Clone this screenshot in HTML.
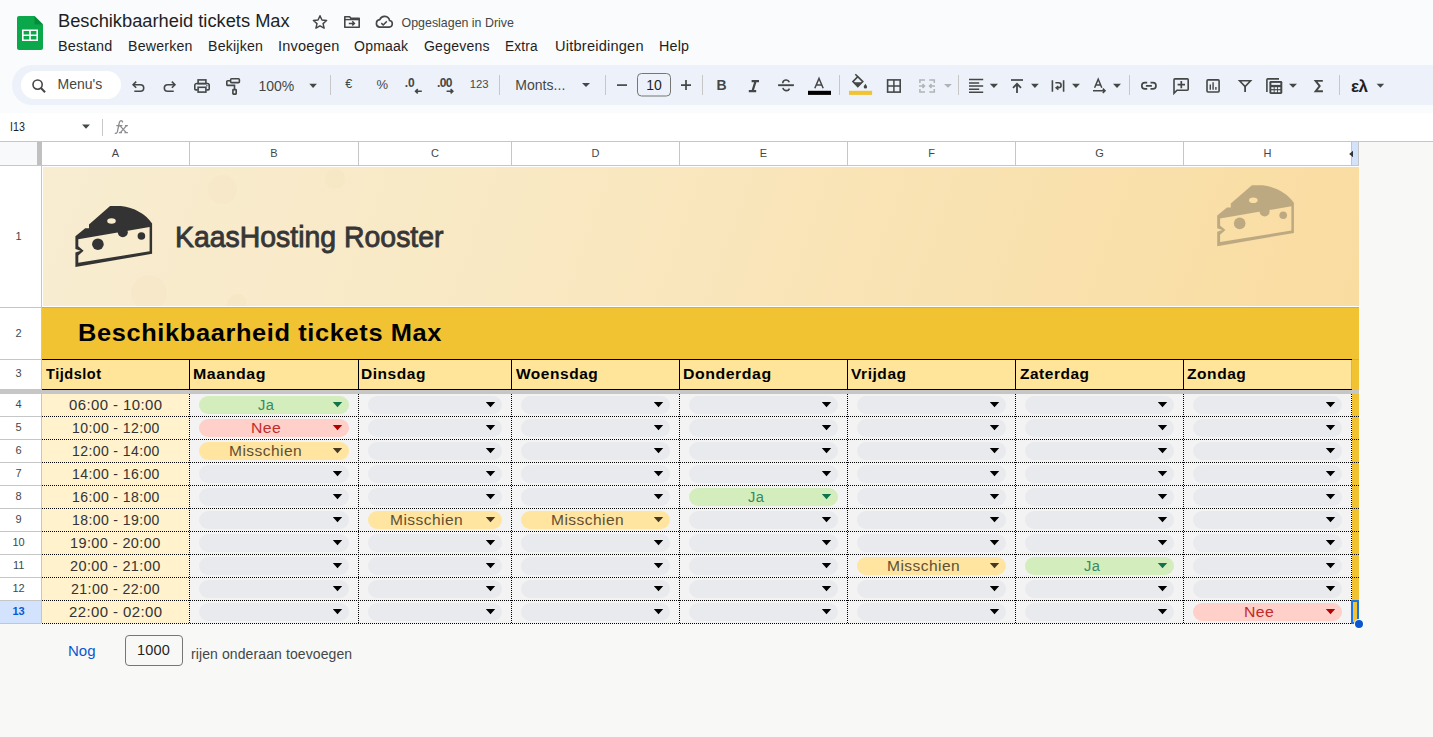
<!DOCTYPE html><html><head><meta charset="utf-8"><style>body{margin:0;width:1433px;height:737px;overflow:hidden;position:relative;background:#f9fbfd;font-family:'Liberation Sans',sans-serif;}div{box-sizing:border-box}</style></head><body>
<svg style="position:absolute;left:17px;top:16px;" width="26" height="34" viewBox="0 0 26 34"><path d="M2 0H17.5L26 8.5V32a2 2 0 0 1-2 2H2a2 2 0 0 1-2-2V2a2 2 0 0 1 2-2z" fill="#0aa84a"/><path d="M17.5 0L26 8.5H17.5z" fill="#058c3a"/><path d="M5 13.5h16v11.5H5z M6.6 15v3.5h5.6V15z M13.8 15v3.5h5.6V15z M6.6 20v3.5h5.6V20z M13.8 20v3.5h5.6V20z" fill="#fff" fill-rule="evenodd"/></svg>
<div style="position:absolute;left:58px;top:11.51px;font-size:18.3px;line-height:18.3px;color:#1f1f1f;font-weight:400;letter-spacing:0px;white-space:nowrap;">Beschikbaarheid tickets Max</div>
<svg style="position:absolute;left:311px;top:14px;" width="18" height="16" viewBox="0 0 24 24"><path d="M12 2.6l2.9 6.4 7 .7-5.3 4.7 1.6 6.9L12 17.7l-6.1 3.6 1.6-6.9L2.1 9.7l7-.7z" fill="none" stroke="#444746" stroke-width="2.2" stroke-linejoin="round"/></svg>
<svg style="position:absolute;left:343px;top:15px;" width="18" height="14" viewBox="0 0 18 14"><path d="M1.8 1.8h4.8l1.4 1.6H16.2V12.2H1.8z" fill="none" stroke="#444746" stroke-width="1.6" stroke-linejoin="round"/><path d="M1.8 4.6H16.2" stroke="#444746" stroke-width="1.4"/><path d="M5.8 8.4h5.6M9.3 6.3l2.1 2.1-2.1 2.1" fill="none" stroke="#444746" stroke-width="1.5"/></svg>
<svg style="position:absolute;left:374px;top:15px;" width="20" height="14" viewBox="0 0 20 14"><path d="M5.4 12.1H15.2a3.3 3.3 0 0 0 .35-6.55A5.1 5.1 0 0 0 5.8 4.6 3.8 3.8 0 0 0 5.4 12.1z" fill="none" stroke="#444746" stroke-width="1.6"/><path d="M7.3 8.1l1.9 1.9 3.6-3.6" fill="none" stroke="#444746" stroke-width="1.5"/></svg>
<div style="position:absolute;left:401.6px;top:16.80px;font-size:12.4px;line-height:12.4px;color:#444746;font-weight:400;letter-spacing:0px;white-space:nowrap;">Opgeslagen in Drive</div>
<div style="position:absolute;left:57.57px;top:39.15px;font-size:14px;line-height:14px;color:#1f1f1f;font-weight:400;letter-spacing:0.2px;white-space:nowrap;transform:scaleX(1.0314);transform-origin:0 0;">Bestand</div>
<div style="position:absolute;left:127.69px;top:39.15px;font-size:14px;line-height:14px;color:#1f1f1f;font-weight:400;letter-spacing:0.2px;white-space:nowrap;transform:scaleX(1.0129);transform-origin:0 0;">Bewerken</div>
<div style="position:absolute;left:207.79px;top:39.15px;font-size:14px;line-height:14px;color:#1f1f1f;font-weight:400;letter-spacing:0.2px;white-space:nowrap;transform:scaleX(1.0113);transform-origin:0 0;">Bekijken</div>
<div style="position:absolute;left:277.56px;top:39.15px;font-size:14px;line-height:14px;color:#1f1f1f;font-weight:400;letter-spacing:0.2px;white-space:nowrap;transform:scaleX(1.0386);transform-origin:0 0;">Invoegen</div>
<div style="position:absolute;left:353.80px;top:39.15px;font-size:14px;line-height:14px;color:#1f1f1f;font-weight:400;letter-spacing:0.2px;white-space:nowrap;transform:scaleX(1.0038);transform-origin:0 0;">Opmaak</div>
<div style="position:absolute;left:423.80px;top:39.15px;font-size:14px;line-height:14px;color:#1f1f1f;font-weight:400;letter-spacing:0.2px;white-space:nowrap;transform:scaleX(1.0031);transform-origin:0 0;">Gegevens</div>
<div style="position:absolute;left:505.42px;top:39.15px;font-size:14px;line-height:14px;color:#1f1f1f;font-weight:400;letter-spacing:0.2px;white-space:nowrap;transform:scaleX(0.9758);transform-origin:0 0;">Extra</div>
<div style="position:absolute;left:554.76px;top:39.15px;font-size:14px;line-height:14px;color:#1f1f1f;font-weight:400;letter-spacing:0.2px;white-space:nowrap;transform:scaleX(1.0434);transform-origin:0 0;">Uitbreidingen</div>
<div style="position:absolute;left:659.18px;top:39.15px;font-size:14px;line-height:14px;color:#1f1f1f;font-weight:400;letter-spacing:0.2px;white-space:nowrap;transform:scaleX(1.0214);transform-origin:0 0;">Help</div>
<div style="position:absolute;left:12px;top:65px;width:1430px;height:40px;background:#edf2fa;border-radius:20px 0 0 20px"></div>
<div style="position:absolute;left:21px;top:71px;width:100px;height:28px;background:#fff;border-radius:14px"></div>
<svg style="position:absolute;left:0;top:65px" width="1433" height="40" viewBox="0 65 1433 40"><circle cx="37.6" cy="84.6" r="4.6" fill="none" stroke="#444746" stroke-width="1.6" stroke-width="1.8"/><path d="M40.9 88l4.2 4.2" stroke="#444746" stroke-width="2"/><path d="M136.2 81.6l-3.1 3.1 3.1 3.1" fill="none" stroke="#444746" stroke-width="1.6" stroke-width="1.7"/><path d="M133.4 84.7H140.4A3.3 3.3 0 0 1 140.4 91.3H134.3" fill="none" stroke="#444746" stroke-width="1.6" stroke-width="1.7"/><g transform="matrix(-1 0 0 1 308.05 0)"><path d="M136.2 81.6l-3.1 3.1 3.1 3.1" fill="none" stroke="#444746" stroke-width="1.6" stroke-width="1.7"/><path d="M133.4 84.7H140.4A3.3 3.3 0 0 1 140.4 91.3H134.3" fill="none" stroke="#444746" stroke-width="1.6" stroke-width="1.7"/></g><rect x="198.1" y="79.9" width="7.8" height="3.8" fill="none" stroke="#444746" stroke-width="1.6"/><path d="M197.6 89.9H195.8A1 1 0 0 1 194.8 88.9V85.4A1.9 1.9 0 0 1 196.7 83.5H207.3A1.9 1.9 0 0 1 209.2 85.4V88.9A1 1 0 0 1 208.2 89.9H206.4" fill="none" stroke="#444746" stroke-width="1.6"/><rect x="198.1" y="87.3" width="7.8" height="4.8" fill="none" stroke="#444746" stroke-width="1.6"/><circle cx="206.9" cy="85.8" r="0.75" fill="#444746"/><rect x="230.6" y="78.8" width="8.8" height="3.8" rx="0.9" fill="none" stroke="#444746" stroke-width="1.6" stroke-width="1.5"/><path d="M230.6 80.7H227.7A0.9 0.9 0 0 0 226.8 81.6V84.5A0.9 0.9 0 0 0 227.7 85.4H234.5V89.6" fill="none" stroke="#444746" stroke-width="1.6" stroke-width="1.5"/><rect x="232.9" y="89.6" width="3.3" height="4.5" rx="0.5" fill="none" stroke="#444746" stroke-width="1.6" stroke-width="1.5"/><path d="M309.3 83.8h7.6l-3.8 4.1z" fill="#444746"/><path d="M582 83h8l-4.0 4.1z" fill="#444746"/><path d="M330.5 75V95" stroke="#c7c7c7" stroke-width="1"/><path d="M499.5 75V95" stroke="#c7c7c7" stroke-width="1"/><path d="M605.5 75V95" stroke="#c7c7c7" stroke-width="1"/><path d="M702.5 75V95" stroke="#c7c7c7" stroke-width="1"/><path d="M839.5 75V95" stroke="#c7c7c7" stroke-width="1"/><path d="M958.5 75V95" stroke="#c7c7c7" stroke-width="1"/><path d="M1129.5 75V95" stroke="#c7c7c7" stroke-width="1"/><path d="M1339.5 75V95" stroke="#c7c7c7" stroke-width="1"/><path d="M421.8 91.3H415.6M417.8 89.2l-2.2 2.1 2.2 2.1" fill="none" stroke="#444746" stroke-width="1.6"/><path d="M446.6 91.3H452.8M450.6 89.2l2.2 2.1-2.2 2.1" fill="none" stroke="#444746" stroke-width="1.6"/><path d="M617 85.1H627" stroke="#444746" stroke-width="1.7"/><path d="M681 85.1H691M686 80.1V90.1" stroke="#444746" stroke-width="1.7"/><rect x="637.5" y="73.5" width="33" height="22.5" rx="4" fill="none" stroke="#747775" stroke-width="1"/><path d="M751.6 81.1H759M748.8 91.1H756.2M755.6 81.1L752.5 91.1" fill="none" stroke="#444746" stroke-width="2.2"/><path d="M778.1 85.2H793.9" stroke="#444746" stroke-width="1.9"/><path d="M782.7 83.3A3.4 3.4 0 0 1 789.3 82.3M782.9 87.9A3.5 3.5 0 0 0 789.5 88.6" fill="none" stroke="#444746" stroke-width="1.6" stroke-width="1.8"/><path d="M814.8 88.3L819 78.4L823.2 88.3M816.3 85H821.7" fill="none" stroke="#444746" stroke-width="1.5"/><rect x="808" y="90.8" width="23" height="4.1" fill="#000"/><path d="M855.3 74.2L857.8 76.7" stroke="#444746" stroke-width="1.6"/><path d="M852.9 81.6L857.8 76.7L862.8 81.6L857.8 86.5z" fill="none" stroke="#444746" stroke-width="1.6" stroke-width="1.6"/><path d="M853.6 82.3H862.1L857.8 86.5z" fill="#444746"/><path d="M865.4 83.8C864.6 85.2 863.7 86.1 863.7 86.9A1.7 1.7 0 0 0 867.1 86.9C867.1 86.1 866.2 85.2 865.4 83.8z" fill="#444746"/><rect x="849" y="90.8" width="23.1" height="4.1" fill="#f1c232"/><rect x="887.6" y="79.9" width="12.6" height="12.2" fill="none" stroke="#444746" stroke-width="1.6" stroke-width="1.7"/><path d="M893.9 79.9V92.1M887.6 86H900.2" stroke="#444746" stroke-width="1.5"/><path d="M925 79.9H919.9V83M919.9 89V92H925M929.3 79.9H934.3V83M934.3 89V92H929.3" fill="none" stroke="#b0b3b5" stroke-width="1.5"/><path d="M919 86H924.5M922.5 84l2 2-2 2M935 86H929.5M931.5 84l-2 2 2 2" fill="none" stroke="#b0b3b5" stroke-width="1.5"/><path d="M944 84h7.9l-3.95 3.8z" fill="#b0b3b5"/><path d="M969 79.6H983.2M969 82.9H979.2M969 86H983.2M969 89.2H979.2M969 92.3H983.2" stroke="#444746" stroke-width="1.5"/><path d="M989.8 83.8h8.2l-4.1 4.1z" fill="#444746"/><path d="M1011 80H1023" stroke="#444746" stroke-width="1.7"/><path d="M1017 92.9V84.3M1013 87.8L1017 83.8L1021 87.8" fill="none" stroke="#444746" stroke-width="1.8"/><path d="M1031 83.8h7.8l-3.9 4.1z" fill="#444746"/><path d="M1052.4 80.2V91.8M1063.6 80.2V91.8" stroke="#444746" stroke-width="1.6"/><path d="M1055.4 82.8H1058.6A2.5 2.5 0 0 1 1058.6 87.8H1056.3" fill="none" stroke="#444746" stroke-width="1.6" stroke-width="1.5"/><path d="M1058.4 86L1056.2 87.8L1058.4 89.6" fill="none" stroke="#444746" stroke-width="1.6" stroke-width="1.5"/><path d="M1072 83.8h7.9l-3.95 4.1z" fill="#444746"/><path d="M1094.6 87.8L1098.2 79.2L1101.8 87.8M1095.9 85H1100.5" fill="none" stroke="#444746" stroke-width="1.5"/><path d="M1093 90.8H1104.8M1102.8 88.6L1105 90.8L1102.8 93" fill="none" stroke="#444746" stroke-width="1.6"/><path d="M1113 83.8h8l-4.0 4.1z" fill="#444746"/><path d="M1147.2 82.7H1144.9A3.1 3.1 0 0 0 1144.9 88.9H1147.2M1150.5 82.7H1152.9A3.1 3.1 0 0 1 1152.9 88.9H1150.5M1145.9 85.8H1151.9" fill="none" stroke="#444746" stroke-width="1.7"/><path d="M1174 93.3V79.8A0.9 0.9 0 0 1 1174.9 78.9H1187.3A0.9 0.9 0 0 1 1188.2 79.8V89.3A0.9 0.9 0 0 1 1187.3 90.2H1177z" fill="none" stroke="#444746" stroke-width="1.6" stroke-width="1.7"/><path d="M1177.6 84.6H1185M1181.3 80.9V88.3" stroke="#444746" stroke-width="1.7"/><rect x="1207" y="79.9" width="12.1" height="12.1" rx="1" fill="none" stroke="#444746" stroke-width="1.6" stroke-width="1.7"/><path d="M1210.3 89.8V84.4M1213.1 89.8V82.3M1215.9 89.8V87" stroke="#444746" stroke-width="1.4"/><path d="M1239.6 80.8H1250.6L1245.1 86.6z" fill="none" stroke="#444746" stroke-width="1.6" stroke-width="1.6"/><path d="M1245.1 86V92" stroke="#444746" stroke-width="1.8"/><path d="M1266.9 92V79.8A0.9 0.9 0 0 1 1267.8 78.9H1279" fill="none" stroke="#444746" stroke-width="1.6" stroke-width="1.4"/><rect x="1269.4" y="80.9" width="12.9" height="13.1" rx="1.4" fill="#444746"/><rect x="1271.4" y="82.9" width="8.9" height="2" fill="#edf2fa"/><rect x="1271.3" y="87.2" width="2.4" height="1.9" fill="#edf2fa"/><rect x="1271.3" y="90.3" width="2.4" height="1.9" fill="#edf2fa"/><rect x="1274.6" y="87.2" width="2.4" height="1.9" fill="#edf2fa"/><rect x="1274.6" y="90.3" width="2.4" height="1.9" fill="#edf2fa"/><rect x="1277.9" y="87.2" width="2.4" height="1.9" fill="#edf2fa"/><rect x="1277.9" y="90.3" width="2.4" height="1.9" fill="#edf2fa"/><path d="M1289 83.8h8l-4.0 4z" fill="#444746"/><path d="M1322.8 80.9H1315.6L1319.7 86.1L1315.6 91.3H1322.9" fill="none" stroke="#444746" stroke-width="1.9"/><path d="M1376.6 83.8h7.6l-3.8 4z" fill="#444746"/></svg>
<div style="position:absolute;left:57.6px;top:77.35px;font-size:14px;line-height:14px;color:#444746;font-weight:400;letter-spacing:0px;white-space:nowrap;">Menu's</div>
<div style="position:absolute;left:258.5px;top:79.15px;font-size:14px;line-height:14px;color:#444746;font-weight:400;letter-spacing:0px;white-space:nowrap;">100%</div>
<div style="position:absolute;left:345.2px;top:78.22px;font-size:12.5px;line-height:12.5px;color:#444746;font-weight:400;letter-spacing:0px;white-space:nowrap;">€</div>
<div style="position:absolute;left:376.5px;top:77.80px;font-size:13px;line-height:13px;color:#444746;font-weight:400;letter-spacing:0px;white-space:nowrap;">%</div>
<div style="position:absolute;left:404.8px;top:76.84px;font-size:12px;line-height:12px;color:#444746;font-weight:700;letter-spacing:-0.2px;white-space:nowrap;">.0</div>
<div style="position:absolute;left:437px;top:76.84px;font-size:12px;line-height:12px;color:#444746;font-weight:700;letter-spacing:-0.6px;white-space:nowrap;">.00</div>
<div style="position:absolute;left:469.8px;top:79.23px;font-size:11.3px;line-height:11.3px;color:#444746;font-weight:400;letter-spacing:0px;white-space:nowrap;">123</div>
<div style="position:absolute;left:515.2px;top:78.05px;font-size:14px;line-height:14px;color:#444746;font-weight:400;letter-spacing:0.05px;white-space:nowrap;">Monts...</div>
<div style="position:absolute;left:646.3px;top:78.05px;font-size:14px;line-height:14px;color:#1f1f1f;font-weight:400;letter-spacing:0px;white-space:nowrap;">10</div>
<div style="position:absolute;left:716.6px;top:78.45px;font-size:14px;line-height:14px;color:#444746;font-weight:700;letter-spacing:0px;white-space:nowrap;">B</div>
<div style="position:absolute;left:1351px;top:77.91px;font-size:17px;line-height:17px;color:#1f1f1f;font-weight:700;letter-spacing:-0.6px;white-space:nowrap;">ελ</div>
<div style="position:absolute;left:0px;top:113px;width:1433px;height:28px;background:#fff;"></div>
<div style="position:absolute;left:9.68px;top:120.30px;font-size:13px;line-height:13px;color:#1f1f1f;font-weight:400;letter-spacing:0px;white-space:nowrap;transform:scaleX(0.8235);transform-origin:0 0;">I13</div>
<svg style="position:absolute;left:0;top:113px" width="200" height="28" viewBox="0 113 200 28"><path d="M82 124.6h8l-4 4.2z" fill="#444746"/><path d="M102.5 119V136" stroke="#c7c7c7"/></svg>
<svg style="position:absolute;left:100px;top:113px" width="40" height="28" viewBox="100 113 40 28"><g fill="none" stroke="#8b8d90" stroke-width="1.3"><path d="M122.4 122.6A1.3 1.3 0 0 0 121.8 120.9C120.6 120.4 119.7 121.1 119.3 122.6L117.4 131.7C117 133.4 115.8 133.7 114.8 133.2"/><path d="M116.3 125.6H122.4"/><path d="M119.9 125.6L126.2 132.6M126.6 125.6L120.3 132.6"/><path d="M118.8 125.6H121.5M124.9 125.6H127.9M118.9 132.6H122M124.5 132.6H127.9" stroke-width="1.2"/></g></svg>
<div style="position:absolute;left:0px;top:141px;width:1433px;height:596px;background:#f8f9f7;"></div>
<div style="position:absolute;left:0px;top:141px;width:1433px;height:1px;background:#c4c7c5;"></div>
<div style="position:absolute;left:0px;top:142px;width:37px;height:23px;background:#f8f9fa;"></div>
<div style="position:absolute;left:42px;top:142px;width:1310px;height:23px;background:#fff;"></div>
<div style="position:absolute;left:37px;top:142px;width:5px;height:23px;background:#c0c0c0;"></div>
<div style="position:absolute;left:1352px;top:142px;width:6px;height:23px;background:#d3e3fd;"></div>
<div style="position:absolute;left:0px;top:165px;width:1359px;height:1px;background:#c4c7c5;"></div>
<div style="position:absolute;left:189px;top:142px;width:1px;height:23px;background:#c4c7c5;"></div>
<div style="position:absolute;left:358px;top:142px;width:1px;height:23px;background:#c4c7c5;"></div>
<div style="position:absolute;left:511px;top:142px;width:1px;height:23px;background:#c4c7c5;"></div>
<div style="position:absolute;left:679px;top:142px;width:1px;height:23px;background:#c4c7c5;"></div>
<div style="position:absolute;left:847px;top:142px;width:1px;height:23px;background:#c4c7c5;"></div>
<div style="position:absolute;left:1015px;top:142px;width:1px;height:23px;background:#c4c7c5;"></div>
<div style="position:absolute;left:1183px;top:142px;width:1px;height:23px;background:#c4c7c5;"></div>
<div style="position:absolute;left:1351px;top:142px;width:1px;height:23px;background:#c4c7c5;"></div>
<div style="position:absolute;left:1358px;top:142px;width:1px;height:23px;background:#c4c7c5;"></div>
<div style="position:absolute;left:85.50px;width:60px;text-align:center;top:147.89px;font-size:11px;line-height:11px;color:#444746;font-weight:400;letter-spacing:0px;text-indent:0px;white-space:nowrap;">A</div>
<div style="position:absolute;left:244.00px;width:60px;text-align:center;top:147.89px;font-size:11px;line-height:11px;color:#444746;font-weight:400;letter-spacing:0px;text-indent:0px;white-space:nowrap;">B</div>
<div style="position:absolute;left:405.00px;width:60px;text-align:center;top:147.89px;font-size:11px;line-height:11px;color:#444746;font-weight:400;letter-spacing:0px;text-indent:0px;white-space:nowrap;">C</div>
<div style="position:absolute;left:565.50px;width:60px;text-align:center;top:147.89px;font-size:11px;line-height:11px;color:#444746;font-weight:400;letter-spacing:0px;text-indent:0px;white-space:nowrap;">D</div>
<div style="position:absolute;left:733.50px;width:60px;text-align:center;top:147.89px;font-size:11px;line-height:11px;color:#444746;font-weight:400;letter-spacing:0px;text-indent:0px;white-space:nowrap;">E</div>
<div style="position:absolute;left:901.50px;width:60px;text-align:center;top:147.89px;font-size:11px;line-height:11px;color:#444746;font-weight:400;letter-spacing:0px;text-indent:0px;white-space:nowrap;">F</div>
<div style="position:absolute;left:1069.50px;width:60px;text-align:center;top:147.89px;font-size:11px;line-height:11px;color:#444746;font-weight:400;letter-spacing:0px;text-indent:0px;white-space:nowrap;">G</div>
<div style="position:absolute;left:1237.50px;width:60px;text-align:center;top:147.89px;font-size:11px;line-height:11px;color:#444746;font-weight:400;letter-spacing:0px;text-indent:0px;white-space:nowrap;">H</div>
<svg style="position:absolute;left:1348px;top:150px" width="6" height="8" viewBox="0 0 6 8"><path d="M1.2 4L5 0.8V7.2z" fill="#333"/></svg>
<div style="position:absolute;left:0px;top:166px;width:41px;height:457px;background:#fff;"></div>
<div style="position:absolute;left:41px;top:166px;width:1px;height:457px;background:#c4c7c5;"></div>
<div style="position:absolute;left:0px;top:307px;width:41px;height:1px;background:#c4c7c5;"></div>
<div style="position:absolute;left:0px;top:359px;width:41px;height:1px;background:#c4c7c5;"></div>
<div style="position:absolute;left:0px;top:389px;width:41px;height:1px;background:#c4c7c5;"></div>
<div style="position:absolute;left:0px;top:416px;width:41px;height:1px;background:#c4c7c5;"></div>
<div style="position:absolute;left:0px;top:439px;width:41px;height:1px;background:#c4c7c5;"></div>
<div style="position:absolute;left:0px;top:462px;width:41px;height:1px;background:#c4c7c5;"></div>
<div style="position:absolute;left:0px;top:485px;width:41px;height:1px;background:#c4c7c5;"></div>
<div style="position:absolute;left:0px;top:508px;width:41px;height:1px;background:#c4c7c5;"></div>
<div style="position:absolute;left:0px;top:531px;width:41px;height:1px;background:#c4c7c5;"></div>
<div style="position:absolute;left:0px;top:554px;width:41px;height:1px;background:#c4c7c5;"></div>
<div style="position:absolute;left:0px;top:577px;width:41px;height:1px;background:#c4c7c5;"></div>
<div style="position:absolute;left:0px;top:600px;width:41px;height:1px;background:#c4c7c5;"></div>
<div style="position:absolute;left:0px;top:623px;width:41px;height:1px;background:#c4c7c5;"></div>
<div style="position:absolute;left:0px;top:601px;width:41px;height:22px;background:#d3e3fd;"></div>
<div style="position:absolute;left:42px;top:166px;width:1317px;height:457px;background:#fff;"></div>
<div style="position:absolute;left:43px;top:167px;width:1316px;height:139px;background:linear-gradient(110deg,#f8edd2 0%,#f9e7bf 45%,#f9dca0 100%);overflow:hidden"><div style="position:absolute;left:165px;top:8px;width:29px;height:29px;border-radius:50%;background:rgba(215,190,140,0.06)"></div><div style="position:absolute;left:282px;top:2px;width:20px;height:20px;border-radius:50%;background:rgba(215,190,140,0.06)"></div><div style="position:absolute;left:88px;top:108px;width:36px;height:36px;border-radius:50%;background:rgba(215,190,140,0.06)"></div><div style="position:absolute;left:184px;top:127px;width:20px;height:20px;border-radius:50%;background:rgba(215,190,140,0.06)"></div></div>
<svg style="position:absolute;left:0;top:0" width="1433" height="320" viewBox="0 0 1433 320"><path d="M110.1 206.1H120.8C134 207.5 145.5 214 152.1 223.5V253.8L75.4 267V236.2L85.2 228.3H89V224.4zM78.3 239.3V246.2L83.6 250.8L78.3 255.6V262.8L149.6 251.3V227z" fill="#333" fill-rule="evenodd"/><path d="M74.6 248.7L80.6 250.8L74.6 252.7z" fill="#f8ecce"/><ellipse cx="111.5" cy="221" rx="4.3" ry="2.8" fill="#f8ecce"/><circle cx="122.8" cy="232.2" r="5" fill="#333"/><circle cx="97.9" cy="244.2" r="5.8" fill="#333"/><circle cx="141.4" cy="236" r="3.8" fill="#333"/><g transform="translate(1141.8 -20.8)" opacity="0.3"><path d="M110.1 206.1H120.8C134 207.5 145.5 214 152.1 223.5V253.8L75.4 267V236.2L85.2 228.3H89V224.4zM78.3 239.3V246.2L83.6 250.8L78.3 255.6V262.8L149.6 251.3V227z" fill="#333" fill-rule="evenodd"/><path d="M74.6 248.7L80.6 250.8L74.6 252.7z" fill="#f9dea3"/><ellipse cx="111.5" cy="221" rx="4.3" ry="2.8" fill="#f9dea3"/><circle cx="122.8" cy="232.2" r="5" fill="#333"/><circle cx="97.9" cy="244.2" r="5.8" fill="#333"/><circle cx="141.4" cy="236" r="3.8" fill="#333"/></g></svg>
<div style="position:absolute;left:174.71px;top:221.60px;font-size:30px;line-height:30px;color:#363636;font-weight:400;letter-spacing:0px;white-space:nowrap;transform:scaleX(0.9473);transform-origin:0 0;-webkit-text-stroke:0.9px #363636;">KaasHosting Rooster</div>
<div style="position:absolute;left:42px;top:307px;width:1317px;height:52px;background:#f1c232;"></div>
<div style="position:absolute;left:42px;top:307px;width:1317px;height:1px;background:#dcb02c;"></div>
<div style="position:absolute;left:78.29px;top:321.18px;font-size:24px;line-height:24px;color:#000;font-weight:700;letter-spacing:0.6px;white-space:nowrap;transform:scaleX(1.0573);transform-origin:0 0;">Beschikbaarheid tickets Max</div>
<div style="position:absolute;left:42px;top:360px;width:1309px;height:29px;background:#ffe599;"></div>
<div style="position:absolute;left:42px;top:359px;width:1310px;height:1px;background:#000;"></div>
<div style="position:absolute;left:42px;top:389px;width:1310px;height:1px;background:#000;"></div>
<div style="position:absolute;left:45.60px;top:367.15px;font-size:14px;line-height:14px;color:#000;font-weight:700;letter-spacing:0.5px;white-space:nowrap;transform:scaleX(1.0377);transform-origin:0 0;">Tijdslot</div>
<div style="position:absolute;left:189px;top:360px;width:1px;height:29px;background:#000;"></div>
<div style="position:absolute;left:192.56px;top:367.15px;font-size:14px;line-height:14px;color:#000;font-weight:700;letter-spacing:0.5px;white-space:nowrap;transform:scaleX(1.1387);transform-origin:0 0;">Maandag</div>
<div style="position:absolute;left:358px;top:360px;width:1px;height:29px;background:#000;"></div>
<div style="position:absolute;left:361.19px;top:367.15px;font-size:14px;line-height:14px;color:#000;font-weight:700;letter-spacing:0.5px;white-space:nowrap;transform:scaleX(1.1053);transform-origin:0 0;">Dinsdag</div>
<div style="position:absolute;left:511px;top:360px;width:1px;height:29px;background:#000;"></div>
<div style="position:absolute;left:516.20px;top:367.15px;font-size:14px;line-height:14px;color:#000;font-weight:700;letter-spacing:0.5px;white-space:nowrap;transform:scaleX(1.1041);transform-origin:0 0;">Woensdag</div>
<div style="position:absolute;left:679px;top:360px;width:1px;height:29px;background:#000;"></div>
<div style="position:absolute;left:682.67px;top:367.15px;font-size:14px;line-height:14px;color:#000;font-weight:700;letter-spacing:0.5px;white-space:nowrap;transform:scaleX(1.1316);transform-origin:0 0;">Donderdag</div>
<div style="position:absolute;left:847px;top:360px;width:1px;height:29px;background:#000;"></div>
<div style="position:absolute;left:851.40px;top:367.15px;font-size:14px;line-height:14px;color:#000;font-weight:700;letter-spacing:0.5px;white-space:nowrap;transform:scaleX(1.1082);transform-origin:0 0;">Vrijdag</div>
<div style="position:absolute;left:1015px;top:360px;width:1px;height:29px;background:#000;"></div>
<div style="position:absolute;left:1020.00px;top:367.15px;font-size:14px;line-height:14px;color:#000;font-weight:700;letter-spacing:0.5px;white-space:nowrap;transform:scaleX(1.1016);transform-origin:0 0;">Zaterdag</div>
<div style="position:absolute;left:1183px;top:360px;width:1px;height:29px;background:#000;"></div>
<div style="position:absolute;left:1187.30px;top:367.15px;font-size:14px;line-height:14px;color:#000;font-weight:700;letter-spacing:0.5px;white-space:nowrap;transform:scaleX(1.1096);transform-origin:0 0;">Zondag</div>
<div style="position:absolute;left:1351px;top:360px;width:1px;height:29px;background:#e0b53a;"></div>
<div style="position:absolute;left:42px;top:393px;width:147px;height:230px;background:#fff2cc;"></div>
<div style="position:absolute;left:190px;top:393px;width:1161px;height:230px;background:#f3f3f3;"></div>
<div style="position:absolute;left:1352px;top:359px;width:7px;height:264px;background:#f1c232;"></div>
<div style="position:absolute;left:1352px;top:359px;width:7px;height:1px;background:#dcb02c;"></div>
<div style="position:absolute;left:0px;top:389px;width:41px;height:5px;background:#c6c6c6;"></div>
<div style="position:absolute;left:42px;top:390px;width:1317px;height:4px;background:#c6c6c6;"></div>
<div style="position:absolute;left:68.63px;top:397.95px;font-size:14px;line-height:14px;color:#333;font-weight:400;letter-spacing:0.4px;white-space:nowrap;transform:scaleX(1.0663);transform-origin:0 0;">06:00 - 10:00</div>
<div style="position:absolute;left:199px;top:396px;width:150px;height:18px;background:#d4edbc;border-radius:9px"></div>
<div style="position:absolute;left:258.15px;top:397.95px;font-size:14px;line-height:14px;color:#388b62;font-weight:400;letter-spacing:0.4px;white-space:nowrap;transform:scaleX(1.0467);transform-origin:0 0;">Ja</div>
<svg style="position:absolute;left:332px;top:402px" width="11" height="6" viewBox="0 0 11 6"><path d="M0.8 0H10.2L5.5 5.3z" fill="#11734b"/></svg>
<div style="position:absolute;left:368px;top:396px;width:134px;height:18px;background:#e8eaed;border-radius:9px"></div>
<svg style="position:absolute;left:485px;top:402px" width="11" height="6" viewBox="0 0 11 6"><path d="M0.8 0H10.2L5.5 5.3z" fill="#000"/></svg>
<div style="position:absolute;left:521px;top:396px;width:149px;height:18px;background:#e8eaed;border-radius:9px"></div>
<svg style="position:absolute;left:653px;top:402px" width="11" height="6" viewBox="0 0 11 6"><path d="M0.8 0H10.2L5.5 5.3z" fill="#000"/></svg>
<div style="position:absolute;left:689px;top:396px;width:149px;height:18px;background:#e8eaed;border-radius:9px"></div>
<svg style="position:absolute;left:821px;top:402px" width="11" height="6" viewBox="0 0 11 6"><path d="M0.8 0H10.2L5.5 5.3z" fill="#000"/></svg>
<div style="position:absolute;left:857px;top:396px;width:149px;height:18px;background:#e8eaed;border-radius:9px"></div>
<svg style="position:absolute;left:989px;top:402px" width="11" height="6" viewBox="0 0 11 6"><path d="M0.8 0H10.2L5.5 5.3z" fill="#000"/></svg>
<div style="position:absolute;left:1025px;top:396px;width:149px;height:18px;background:#e8eaed;border-radius:9px"></div>
<svg style="position:absolute;left:1157px;top:402px" width="11" height="6" viewBox="0 0 11 6"><path d="M0.8 0H10.2L5.5 5.3z" fill="#000"/></svg>
<div style="position:absolute;left:1193px;top:396px;width:149px;height:18px;background:#e8eaed;border-radius:9px"></div>
<svg style="position:absolute;left:1325px;top:402px" width="11" height="6" viewBox="0 0 11 6"><path d="M0.8 0H10.2L5.5 5.3z" fill="#000"/></svg>
<div style="position:absolute;left:71.50px;top:420.95px;font-size:14px;line-height:14px;color:#333;font-weight:400;letter-spacing:0.4px;white-space:nowrap;transform:scaleX(1.0012);transform-origin:0 0;">10:00 - 12:00</div>
<div style="position:absolute;left:199px;top:419px;width:150px;height:18px;background:#ffcfc9;border-radius:9px"></div>
<div style="position:absolute;left:250.77px;top:420.95px;font-size:14px;line-height:14px;color:#c12b2a;font-weight:400;letter-spacing:0.4px;white-space:nowrap;transform:scaleX(1.1280);transform-origin:0 0;">Nee</div>
<svg style="position:absolute;left:332px;top:425px" width="11" height="6" viewBox="0 0 11 6"><path d="M0.8 0H10.2L5.5 5.3z" fill="#b10202"/></svg>
<div style="position:absolute;left:368px;top:419px;width:134px;height:18px;background:#e8eaed;border-radius:9px"></div>
<svg style="position:absolute;left:485px;top:425px" width="11" height="6" viewBox="0 0 11 6"><path d="M0.8 0H10.2L5.5 5.3z" fill="#000"/></svg>
<div style="position:absolute;left:521px;top:419px;width:149px;height:18px;background:#e8eaed;border-radius:9px"></div>
<svg style="position:absolute;left:653px;top:425px" width="11" height="6" viewBox="0 0 11 6"><path d="M0.8 0H10.2L5.5 5.3z" fill="#000"/></svg>
<div style="position:absolute;left:689px;top:419px;width:149px;height:18px;background:#e8eaed;border-radius:9px"></div>
<svg style="position:absolute;left:821px;top:425px" width="11" height="6" viewBox="0 0 11 6"><path d="M0.8 0H10.2L5.5 5.3z" fill="#000"/></svg>
<div style="position:absolute;left:857px;top:419px;width:149px;height:18px;background:#e8eaed;border-radius:9px"></div>
<svg style="position:absolute;left:989px;top:425px" width="11" height="6" viewBox="0 0 11 6"><path d="M0.8 0H10.2L5.5 5.3z" fill="#000"/></svg>
<div style="position:absolute;left:1025px;top:419px;width:149px;height:18px;background:#e8eaed;border-radius:9px"></div>
<svg style="position:absolute;left:1157px;top:425px" width="11" height="6" viewBox="0 0 11 6"><path d="M0.8 0H10.2L5.5 5.3z" fill="#000"/></svg>
<div style="position:absolute;left:1193px;top:419px;width:149px;height:18px;background:#e8eaed;border-radius:9px"></div>
<svg style="position:absolute;left:1325px;top:425px" width="11" height="6" viewBox="0 0 11 6"><path d="M0.8 0H10.2L5.5 5.3z" fill="#000"/></svg>
<div style="position:absolute;left:71.50px;top:443.95px;font-size:14px;line-height:14px;color:#333;font-weight:400;letter-spacing:0.4px;white-space:nowrap;transform:scaleX(1.0012);transform-origin:0 0;">12:00 - 14:00</div>
<div style="position:absolute;left:199px;top:442px;width:150px;height:18px;background:#ffe5a0;border-radius:9px"></div>
<div style="position:absolute;left:229.39px;top:443.95px;font-size:14px;line-height:14px;color:#5f4f33;font-weight:400;letter-spacing:0.4px;white-space:nowrap;transform:scaleX(1.1094);transform-origin:0 0;">Misschien</div>
<svg style="position:absolute;left:332px;top:448px" width="11" height="6" viewBox="0 0 11 6"><path d="M0.8 0H10.2L5.5 5.3z" fill="#473821"/></svg>
<div style="position:absolute;left:368px;top:442px;width:134px;height:18px;background:#e8eaed;border-radius:9px"></div>
<svg style="position:absolute;left:485px;top:448px" width="11" height="6" viewBox="0 0 11 6"><path d="M0.8 0H10.2L5.5 5.3z" fill="#000"/></svg>
<div style="position:absolute;left:521px;top:442px;width:149px;height:18px;background:#e8eaed;border-radius:9px"></div>
<svg style="position:absolute;left:653px;top:448px" width="11" height="6" viewBox="0 0 11 6"><path d="M0.8 0H10.2L5.5 5.3z" fill="#000"/></svg>
<div style="position:absolute;left:689px;top:442px;width:149px;height:18px;background:#e8eaed;border-radius:9px"></div>
<svg style="position:absolute;left:821px;top:448px" width="11" height="6" viewBox="0 0 11 6"><path d="M0.8 0H10.2L5.5 5.3z" fill="#000"/></svg>
<div style="position:absolute;left:857px;top:442px;width:149px;height:18px;background:#e8eaed;border-radius:9px"></div>
<svg style="position:absolute;left:989px;top:448px" width="11" height="6" viewBox="0 0 11 6"><path d="M0.8 0H10.2L5.5 5.3z" fill="#000"/></svg>
<div style="position:absolute;left:1025px;top:442px;width:149px;height:18px;background:#e8eaed;border-radius:9px"></div>
<svg style="position:absolute;left:1157px;top:448px" width="11" height="6" viewBox="0 0 11 6"><path d="M0.8 0H10.2L5.5 5.3z" fill="#000"/></svg>
<div style="position:absolute;left:1193px;top:442px;width:149px;height:18px;background:#e8eaed;border-radius:9px"></div>
<svg style="position:absolute;left:1325px;top:448px" width="11" height="6" viewBox="0 0 11 6"><path d="M0.8 0H10.2L5.5 5.3z" fill="#000"/></svg>
<div style="position:absolute;left:71.50px;top:466.95px;font-size:14px;line-height:14px;color:#333;font-weight:400;letter-spacing:0.4px;white-space:nowrap;transform:scaleX(1.0012);transform-origin:0 0;">14:00 - 16:00</div>
<div style="position:absolute;left:199px;top:465px;width:150px;height:18px;background:#e8eaed;border-radius:9px"></div>
<svg style="position:absolute;left:332px;top:471px" width="11" height="6" viewBox="0 0 11 6"><path d="M0.8 0H10.2L5.5 5.3z" fill="#000"/></svg>
<div style="position:absolute;left:368px;top:465px;width:134px;height:18px;background:#e8eaed;border-radius:9px"></div>
<svg style="position:absolute;left:485px;top:471px" width="11" height="6" viewBox="0 0 11 6"><path d="M0.8 0H10.2L5.5 5.3z" fill="#000"/></svg>
<div style="position:absolute;left:521px;top:465px;width:149px;height:18px;background:#e8eaed;border-radius:9px"></div>
<svg style="position:absolute;left:653px;top:471px" width="11" height="6" viewBox="0 0 11 6"><path d="M0.8 0H10.2L5.5 5.3z" fill="#000"/></svg>
<div style="position:absolute;left:689px;top:465px;width:149px;height:18px;background:#e8eaed;border-radius:9px"></div>
<svg style="position:absolute;left:821px;top:471px" width="11" height="6" viewBox="0 0 11 6"><path d="M0.8 0H10.2L5.5 5.3z" fill="#000"/></svg>
<div style="position:absolute;left:857px;top:465px;width:149px;height:18px;background:#e8eaed;border-radius:9px"></div>
<svg style="position:absolute;left:989px;top:471px" width="11" height="6" viewBox="0 0 11 6"><path d="M0.8 0H10.2L5.5 5.3z" fill="#000"/></svg>
<div style="position:absolute;left:1025px;top:465px;width:149px;height:18px;background:#e8eaed;border-radius:9px"></div>
<svg style="position:absolute;left:1157px;top:471px" width="11" height="6" viewBox="0 0 11 6"><path d="M0.8 0H10.2L5.5 5.3z" fill="#000"/></svg>
<div style="position:absolute;left:1193px;top:465px;width:149px;height:18px;background:#e8eaed;border-radius:9px"></div>
<svg style="position:absolute;left:1325px;top:471px" width="11" height="6" viewBox="0 0 11 6"><path d="M0.8 0H10.2L5.5 5.3z" fill="#000"/></svg>
<div style="position:absolute;left:71.50px;top:489.95px;font-size:14px;line-height:14px;color:#333;font-weight:400;letter-spacing:0.4px;white-space:nowrap;transform:scaleX(1.0012);transform-origin:0 0;">16:00 - 18:00</div>
<div style="position:absolute;left:199px;top:488px;width:150px;height:18px;background:#e8eaed;border-radius:9px"></div>
<svg style="position:absolute;left:332px;top:494px" width="11" height="6" viewBox="0 0 11 6"><path d="M0.8 0H10.2L5.5 5.3z" fill="#000"/></svg>
<div style="position:absolute;left:368px;top:488px;width:134px;height:18px;background:#e8eaed;border-radius:9px"></div>
<svg style="position:absolute;left:485px;top:494px" width="11" height="6" viewBox="0 0 11 6"><path d="M0.8 0H10.2L5.5 5.3z" fill="#000"/></svg>
<div style="position:absolute;left:521px;top:488px;width:149px;height:18px;background:#e8eaed;border-radius:9px"></div>
<svg style="position:absolute;left:653px;top:494px" width="11" height="6" viewBox="0 0 11 6"><path d="M0.8 0H10.2L5.5 5.3z" fill="#000"/></svg>
<div style="position:absolute;left:689px;top:488px;width:149px;height:18px;background:#d4edbc;border-radius:9px"></div>
<div style="position:absolute;left:747.65px;top:489.95px;font-size:14px;line-height:14px;color:#388b62;font-weight:400;letter-spacing:0.4px;white-space:nowrap;transform:scaleX(1.0467);transform-origin:0 0;">Ja</div>
<svg style="position:absolute;left:821px;top:494px" width="11" height="6" viewBox="0 0 11 6"><path d="M0.8 0H10.2L5.5 5.3z" fill="#11734b"/></svg>
<div style="position:absolute;left:857px;top:488px;width:149px;height:18px;background:#e8eaed;border-radius:9px"></div>
<svg style="position:absolute;left:989px;top:494px" width="11" height="6" viewBox="0 0 11 6"><path d="M0.8 0H10.2L5.5 5.3z" fill="#000"/></svg>
<div style="position:absolute;left:1025px;top:488px;width:149px;height:18px;background:#e8eaed;border-radius:9px"></div>
<svg style="position:absolute;left:1157px;top:494px" width="11" height="6" viewBox="0 0 11 6"><path d="M0.8 0H10.2L5.5 5.3z" fill="#000"/></svg>
<div style="position:absolute;left:1193px;top:488px;width:149px;height:18px;background:#e8eaed;border-radius:9px"></div>
<svg style="position:absolute;left:1325px;top:494px" width="11" height="6" viewBox="0 0 11 6"><path d="M0.8 0H10.2L5.5 5.3z" fill="#000"/></svg>
<div style="position:absolute;left:71.50px;top:512.95px;font-size:14px;line-height:14px;color:#333;font-weight:400;letter-spacing:0.4px;white-space:nowrap;transform:scaleX(1.0012);transform-origin:0 0;">18:00 - 19:00</div>
<div style="position:absolute;left:199px;top:511px;width:150px;height:18px;background:#e8eaed;border-radius:9px"></div>
<svg style="position:absolute;left:332px;top:517px" width="11" height="6" viewBox="0 0 11 6"><path d="M0.8 0H10.2L5.5 5.3z" fill="#000"/></svg>
<div style="position:absolute;left:368px;top:511px;width:134px;height:18px;background:#ffe5a0;border-radius:9px"></div>
<div style="position:absolute;left:390.39px;top:512.95px;font-size:14px;line-height:14px;color:#5f4f33;font-weight:400;letter-spacing:0.4px;white-space:nowrap;transform:scaleX(1.1094);transform-origin:0 0;">Misschien</div>
<svg style="position:absolute;left:485px;top:517px" width="11" height="6" viewBox="0 0 11 6"><path d="M0.8 0H10.2L5.5 5.3z" fill="#473821"/></svg>
<div style="position:absolute;left:521px;top:511px;width:149px;height:18px;background:#ffe5a0;border-radius:9px"></div>
<div style="position:absolute;left:550.89px;top:512.95px;font-size:14px;line-height:14px;color:#5f4f33;font-weight:400;letter-spacing:0.4px;white-space:nowrap;transform:scaleX(1.1094);transform-origin:0 0;">Misschien</div>
<svg style="position:absolute;left:653px;top:517px" width="11" height="6" viewBox="0 0 11 6"><path d="M0.8 0H10.2L5.5 5.3z" fill="#473821"/></svg>
<div style="position:absolute;left:689px;top:511px;width:149px;height:18px;background:#e8eaed;border-radius:9px"></div>
<svg style="position:absolute;left:821px;top:517px" width="11" height="6" viewBox="0 0 11 6"><path d="M0.8 0H10.2L5.5 5.3z" fill="#000"/></svg>
<div style="position:absolute;left:857px;top:511px;width:149px;height:18px;background:#e8eaed;border-radius:9px"></div>
<svg style="position:absolute;left:989px;top:517px" width="11" height="6" viewBox="0 0 11 6"><path d="M0.8 0H10.2L5.5 5.3z" fill="#000"/></svg>
<div style="position:absolute;left:1025px;top:511px;width:149px;height:18px;background:#e8eaed;border-radius:9px"></div>
<svg style="position:absolute;left:1157px;top:517px" width="11" height="6" viewBox="0 0 11 6"><path d="M0.8 0H10.2L5.5 5.3z" fill="#000"/></svg>
<div style="position:absolute;left:1193px;top:511px;width:149px;height:18px;background:#e8eaed;border-radius:9px"></div>
<svg style="position:absolute;left:1325px;top:517px" width="11" height="6" viewBox="0 0 11 6"><path d="M0.8 0H10.2L5.5 5.3z" fill="#000"/></svg>
<div style="position:absolute;left:70.07px;top:535.95px;font-size:14px;line-height:14px;color:#333;font-weight:400;letter-spacing:0.4px;white-space:nowrap;transform:scaleX(1.0337);transform-origin:0 0;">19:00 - 20:00</div>
<div style="position:absolute;left:199px;top:534px;width:150px;height:18px;background:#e8eaed;border-radius:9px"></div>
<svg style="position:absolute;left:332px;top:540px" width="11" height="6" viewBox="0 0 11 6"><path d="M0.8 0H10.2L5.5 5.3z" fill="#000"/></svg>
<div style="position:absolute;left:368px;top:534px;width:134px;height:18px;background:#e8eaed;border-radius:9px"></div>
<svg style="position:absolute;left:485px;top:540px" width="11" height="6" viewBox="0 0 11 6"><path d="M0.8 0H10.2L5.5 5.3z" fill="#000"/></svg>
<div style="position:absolute;left:521px;top:534px;width:149px;height:18px;background:#e8eaed;border-radius:9px"></div>
<svg style="position:absolute;left:653px;top:540px" width="11" height="6" viewBox="0 0 11 6"><path d="M0.8 0H10.2L5.5 5.3z" fill="#000"/></svg>
<div style="position:absolute;left:689px;top:534px;width:149px;height:18px;background:#e8eaed;border-radius:9px"></div>
<svg style="position:absolute;left:821px;top:540px" width="11" height="6" viewBox="0 0 11 6"><path d="M0.8 0H10.2L5.5 5.3z" fill="#000"/></svg>
<div style="position:absolute;left:857px;top:534px;width:149px;height:18px;background:#e8eaed;border-radius:9px"></div>
<svg style="position:absolute;left:989px;top:540px" width="11" height="6" viewBox="0 0 11 6"><path d="M0.8 0H10.2L5.5 5.3z" fill="#000"/></svg>
<div style="position:absolute;left:1025px;top:534px;width:149px;height:18px;background:#e8eaed;border-radius:9px"></div>
<svg style="position:absolute;left:1157px;top:540px" width="11" height="6" viewBox="0 0 11 6"><path d="M0.8 0H10.2L5.5 5.3z" fill="#000"/></svg>
<div style="position:absolute;left:1193px;top:534px;width:149px;height:18px;background:#e8eaed;border-radius:9px"></div>
<svg style="position:absolute;left:1325px;top:540px" width="11" height="6" viewBox="0 0 11 6"><path d="M0.8 0H10.2L5.5 5.3z" fill="#000"/></svg>
<div style="position:absolute;left:70.07px;top:558.95px;font-size:14px;line-height:14px;color:#333;font-weight:400;letter-spacing:0.4px;white-space:nowrap;transform:scaleX(1.0337);transform-origin:0 0;">20:00 - 21:00</div>
<div style="position:absolute;left:199px;top:557px;width:150px;height:18px;background:#e8eaed;border-radius:9px"></div>
<svg style="position:absolute;left:332px;top:563px" width="11" height="6" viewBox="0 0 11 6"><path d="M0.8 0H10.2L5.5 5.3z" fill="#000"/></svg>
<div style="position:absolute;left:368px;top:557px;width:134px;height:18px;background:#e8eaed;border-radius:9px"></div>
<svg style="position:absolute;left:485px;top:563px" width="11" height="6" viewBox="0 0 11 6"><path d="M0.8 0H10.2L5.5 5.3z" fill="#000"/></svg>
<div style="position:absolute;left:521px;top:557px;width:149px;height:18px;background:#e8eaed;border-radius:9px"></div>
<svg style="position:absolute;left:653px;top:563px" width="11" height="6" viewBox="0 0 11 6"><path d="M0.8 0H10.2L5.5 5.3z" fill="#000"/></svg>
<div style="position:absolute;left:689px;top:557px;width:149px;height:18px;background:#e8eaed;border-radius:9px"></div>
<svg style="position:absolute;left:821px;top:563px" width="11" height="6" viewBox="0 0 11 6"><path d="M0.8 0H10.2L5.5 5.3z" fill="#000"/></svg>
<div style="position:absolute;left:857px;top:557px;width:149px;height:18px;background:#ffe5a0;border-radius:9px"></div>
<div style="position:absolute;left:886.89px;top:558.95px;font-size:14px;line-height:14px;color:#5f4f33;font-weight:400;letter-spacing:0.4px;white-space:nowrap;transform:scaleX(1.1094);transform-origin:0 0;">Misschien</div>
<svg style="position:absolute;left:989px;top:563px" width="11" height="6" viewBox="0 0 11 6"><path d="M0.8 0H10.2L5.5 5.3z" fill="#473821"/></svg>
<div style="position:absolute;left:1025px;top:557px;width:149px;height:18px;background:#d4edbc;border-radius:9px"></div>
<div style="position:absolute;left:1083.65px;top:558.95px;font-size:14px;line-height:14px;color:#388b62;font-weight:400;letter-spacing:0.4px;white-space:nowrap;transform:scaleX(1.0467);transform-origin:0 0;">Ja</div>
<svg style="position:absolute;left:1157px;top:563px" width="11" height="6" viewBox="0 0 11 6"><path d="M0.8 0H10.2L5.5 5.3z" fill="#11734b"/></svg>
<div style="position:absolute;left:1193px;top:557px;width:149px;height:18px;background:#e8eaed;border-radius:9px"></div>
<svg style="position:absolute;left:1325px;top:563px" width="11" height="6" viewBox="0 0 11 6"><path d="M0.8 0H10.2L5.5 5.3z" fill="#000"/></svg>
<div style="position:absolute;left:70.88px;top:581.95px;font-size:14px;line-height:14px;color:#333;font-weight:400;letter-spacing:0.4px;white-space:nowrap;transform:scaleX(1.0151);transform-origin:0 0;">21:00 - 22:00</div>
<div style="position:absolute;left:199px;top:580px;width:150px;height:18px;background:#e8eaed;border-radius:9px"></div>
<svg style="position:absolute;left:332px;top:586px" width="11" height="6" viewBox="0 0 11 6"><path d="M0.8 0H10.2L5.5 5.3z" fill="#000"/></svg>
<div style="position:absolute;left:368px;top:580px;width:134px;height:18px;background:#e8eaed;border-radius:9px"></div>
<svg style="position:absolute;left:485px;top:586px" width="11" height="6" viewBox="0 0 11 6"><path d="M0.8 0H10.2L5.5 5.3z" fill="#000"/></svg>
<div style="position:absolute;left:521px;top:580px;width:149px;height:18px;background:#e8eaed;border-radius:9px"></div>
<svg style="position:absolute;left:653px;top:586px" width="11" height="6" viewBox="0 0 11 6"><path d="M0.8 0H10.2L5.5 5.3z" fill="#000"/></svg>
<div style="position:absolute;left:689px;top:580px;width:149px;height:18px;background:#e8eaed;border-radius:9px"></div>
<svg style="position:absolute;left:821px;top:586px" width="11" height="6" viewBox="0 0 11 6"><path d="M0.8 0H10.2L5.5 5.3z" fill="#000"/></svg>
<div style="position:absolute;left:857px;top:580px;width:149px;height:18px;background:#e8eaed;border-radius:9px"></div>
<svg style="position:absolute;left:989px;top:586px" width="11" height="6" viewBox="0 0 11 6"><path d="M0.8 0H10.2L5.5 5.3z" fill="#000"/></svg>
<div style="position:absolute;left:1025px;top:580px;width:149px;height:18px;background:#e8eaed;border-radius:9px"></div>
<svg style="position:absolute;left:1157px;top:586px" width="11" height="6" viewBox="0 0 11 6"><path d="M0.8 0H10.2L5.5 5.3z" fill="#000"/></svg>
<div style="position:absolute;left:1193px;top:580px;width:149px;height:18px;background:#e8eaed;border-radius:9px"></div>
<svg style="position:absolute;left:1325px;top:586px" width="11" height="6" viewBox="0 0 11 6"><path d="M0.8 0H10.2L5.5 5.3z" fill="#000"/></svg>
<div style="position:absolute;left:68.63px;top:604.95px;font-size:14px;line-height:14px;color:#333;font-weight:400;letter-spacing:0.4px;white-space:nowrap;transform:scaleX(1.0663);transform-origin:0 0;">22:00 - 02:00</div>
<div style="position:absolute;left:199px;top:603px;width:150px;height:18px;background:#e8eaed;border-radius:9px"></div>
<svg style="position:absolute;left:332px;top:609px" width="11" height="6" viewBox="0 0 11 6"><path d="M0.8 0H10.2L5.5 5.3z" fill="#000"/></svg>
<div style="position:absolute;left:368px;top:603px;width:134px;height:18px;background:#e8eaed;border-radius:9px"></div>
<svg style="position:absolute;left:485px;top:609px" width="11" height="6" viewBox="0 0 11 6"><path d="M0.8 0H10.2L5.5 5.3z" fill="#000"/></svg>
<div style="position:absolute;left:521px;top:603px;width:149px;height:18px;background:#e8eaed;border-radius:9px"></div>
<svg style="position:absolute;left:653px;top:609px" width="11" height="6" viewBox="0 0 11 6"><path d="M0.8 0H10.2L5.5 5.3z" fill="#000"/></svg>
<div style="position:absolute;left:689px;top:603px;width:149px;height:18px;background:#e8eaed;border-radius:9px"></div>
<svg style="position:absolute;left:821px;top:609px" width="11" height="6" viewBox="0 0 11 6"><path d="M0.8 0H10.2L5.5 5.3z" fill="#000"/></svg>
<div style="position:absolute;left:857px;top:603px;width:149px;height:18px;background:#e8eaed;border-radius:9px"></div>
<svg style="position:absolute;left:989px;top:609px" width="11" height="6" viewBox="0 0 11 6"><path d="M0.8 0H10.2L5.5 5.3z" fill="#000"/></svg>
<div style="position:absolute;left:1025px;top:603px;width:149px;height:18px;background:#e8eaed;border-radius:9px"></div>
<svg style="position:absolute;left:1157px;top:609px" width="11" height="6" viewBox="0 0 11 6"><path d="M0.8 0H10.2L5.5 5.3z" fill="#000"/></svg>
<div style="position:absolute;left:1193px;top:603px;width:149px;height:18px;background:#ffcfc9;border-radius:9px"></div>
<div style="position:absolute;left:1244.27px;top:604.95px;font-size:14px;line-height:14px;color:#c12b2a;font-weight:400;letter-spacing:0.4px;white-space:nowrap;transform:scaleX(1.1280);transform-origin:0 0;">Nee</div>
<svg style="position:absolute;left:1325px;top:609px" width="11" height="6" viewBox="0 0 11 6"><path d="M0.8 0H10.2L5.5 5.3z" fill="#b10202"/></svg>
<svg style="position:absolute;left:0;top:0" width="1433" height="640" viewBox="0 0 1433 640"><path d="M42 416.5H1359 M42 439.5H1359 M42 462.5H1359 M42 485.5H1359 M42 508.5H1359 M42 531.5H1359 M42 554.5H1359 M42 577.5H1359 M42 600.5H1359 M42 623.5H1359 M189.5 394V624 M358.5 394V624 M511.5 394V624 M679.5 394V624 M847.5 394V624 M1015.5 394V624 M1183.5 394V624 M1351.5 394V624" stroke="#000" stroke-width="1" stroke-dasharray="1 1" fill="none"/></svg>
<div style="position:absolute;left:-1.40px;width:40px;text-align:center;top:230.99px;font-size:11px;line-height:11px;color:#444746;font-weight:400;letter-spacing:0px;text-indent:0px;white-space:nowrap;">1</div>
<div style="position:absolute;left:-1.40px;width:40px;text-align:center;top:327.89px;font-size:11px;line-height:11px;color:#444746;font-weight:400;letter-spacing:0px;text-indent:0px;white-space:nowrap;">2</div>
<div style="position:absolute;left:-1.40px;width:40px;text-align:center;top:368.29px;font-size:11px;line-height:11px;color:#444746;font-weight:400;letter-spacing:0px;text-indent:0px;white-space:nowrap;">3</div>
<div style="position:absolute;left:-1.40px;width:40px;text-align:center;top:398.99px;font-size:11px;line-height:11px;color:#444746;font-weight:400;letter-spacing:0px;text-indent:0px;white-space:nowrap;">4</div>
<div style="position:absolute;left:-1.40px;width:40px;text-align:center;top:421.99px;font-size:11px;line-height:11px;color:#444746;font-weight:400;letter-spacing:0px;text-indent:0px;white-space:nowrap;">5</div>
<div style="position:absolute;left:-1.40px;width:40px;text-align:center;top:444.99px;font-size:11px;line-height:11px;color:#444746;font-weight:400;letter-spacing:0px;text-indent:0px;white-space:nowrap;">6</div>
<div style="position:absolute;left:-1.40px;width:40px;text-align:center;top:467.99px;font-size:11px;line-height:11px;color:#444746;font-weight:400;letter-spacing:0px;text-indent:0px;white-space:nowrap;">7</div>
<div style="position:absolute;left:-1.40px;width:40px;text-align:center;top:490.99px;font-size:11px;line-height:11px;color:#444746;font-weight:400;letter-spacing:0px;text-indent:0px;white-space:nowrap;">8</div>
<div style="position:absolute;left:-1.40px;width:40px;text-align:center;top:513.99px;font-size:11px;line-height:11px;color:#444746;font-weight:400;letter-spacing:0px;text-indent:0px;white-space:nowrap;">9</div>
<div style="position:absolute;left:-1.40px;width:40px;text-align:center;top:536.99px;font-size:11px;line-height:11px;color:#444746;font-weight:400;letter-spacing:0px;text-indent:0px;white-space:nowrap;">10</div>
<div style="position:absolute;left:-1.40px;width:40px;text-align:center;top:559.99px;font-size:11px;line-height:11px;color:#444746;font-weight:400;letter-spacing:0px;text-indent:0px;white-space:nowrap;">11</div>
<div style="position:absolute;left:-1.40px;width:40px;text-align:center;top:582.99px;font-size:11px;line-height:11px;color:#444746;font-weight:400;letter-spacing:0px;text-indent:0px;white-space:nowrap;">12</div>
<div style="position:absolute;left:-1.40px;width:40px;text-align:center;top:605.99px;font-size:11px;line-height:11px;color:#0b57d0;font-weight:700;letter-spacing:0px;text-indent:0px;white-space:nowrap;">13</div>
<div style="position:absolute;left:1351px;top:600px;width:8px;height:24px;border:2px solid #1a73e8"></div>
<div style="position:absolute;left:1355px;top:620px;width:8px;height:8px;border-radius:50%;background:#0b57d0;box-shadow:0 0 0 1px #fff"></div>
<div style="position:absolute;left:68px;top:642.90px;font-size:15px;line-height:15px;color:#0b57d0;font-weight:400;letter-spacing:0px;white-space:nowrap;">Nog</div>
<div style="position:absolute;left:125px;top:635px;width:58px;height:31px;border:1px solid #747775;border-radius:4px;background:transparent"></div>
<div style="position:absolute;left:137px;top:643.33px;font-size:14.5px;line-height:14.5px;color:#1f1f1f;font-weight:400;letter-spacing:0.2px;white-space:nowrap;">1000</div>
<div style="position:absolute;left:191px;top:646.55px;font-size:14px;line-height:14px;color:#444746;font-weight:400;letter-spacing:0.1px;white-space:nowrap;">rijen onderaan toevoegen</div>
</body></html>
